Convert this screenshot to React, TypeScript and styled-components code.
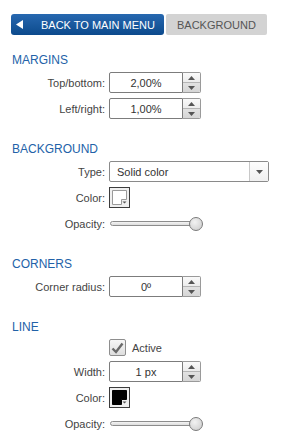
import React from "react";
import styled, { createGlobalStyle } from "styled-components";

const GlobalStyle = createGlobalStyle`
  html, body { margin: 0; padding: 0; background: #ffffff; }
  body { font-family: "Liberation Sans", Arial, sans-serif; color: #444; }
  * { box-sizing: border-box; }
`;

const Panel = styled.div`
  width: 281px;
  padding-top: 14px;
  padding-bottom: 12px;
`;

const Header = styled.div`
  display: flex;
  gap: 2px;
  padding-left: 11px;
  height: 21px;
`;

const BackButton = styled.button`
  all: unset;
  width: 153px;
  height: 21px;
  border-radius: 3px;
  background: linear-gradient(#2768b0, #0c4a8c);
  color: #fff;
  font-size: 11px;
  display: flex;
  align-items: center;
  padding-left: 5px;
  gap: 18px;
  box-sizing: border-box;
  font-family: "Liberation Sans", Arial, sans-serif;
`;

const Tab = styled.div`
  width: 101px;
  height: 21px;
  border-radius: 2px;
  background: #d3d3d3;
  color: #555;
  font-size: 11px;
  display: flex;
  align-items: center;
  padding-left: 11px;
`;

const Section = styled.section<{ $first?: boolean }>`
  margin-top: ${(p) => (p.$first ? 17 : 22)}px;
`;

const Title = styled.div`
  font-size: 12px;
  line-height: 16px;
  color: #2262a8;
  padding-left: 12px;
  margin-bottom: 4px;
`;

const Rows = styled.div`
  display: flex;
  flex-direction: column;
  gap: 5px;
`;

const Row = styled.div<{ $h?: number }>`
  display: grid;
  grid-template-columns: 105px auto;
  column-gap: 4px;
  align-items: center;
  height: ${(p) => p.$h ?? 21}px;
`;

const Label = styled.label`
  text-align: right;
  font-size: 11px;
  color: #444;
  white-space: nowrap;
`;

const NumberBox = styled.div`
  display: flex;
  width: 92px;
  height: 21px;
`;

const Field = styled.div`
  flex: 1;
  border: 1px solid #7c7c7c;
  border-radius: 2px 0 0 2px;
  background: #fff;
  font-size: 11px;
  color: #333;
  display: flex;
  align-items: center;
  justify-content: center;
`;

const Spinner = styled.div`
  width: 18px;
  display: flex;
  flex-direction: column;
  border: 1px solid #9a9a9a;
  border-left: none;
  border-radius: 0 2px 2px 0;
  overflow: hidden;
`;

const SpinHalf = styled.div<{ $down?: boolean }>`
  flex: 1;
  display: flex;
  align-items: center;
  justify-content: center;
  background: ${(p) => (p.$down ? "linear-gradient(#e2e2e2, #d6d6d6)" : "linear-gradient(#fafafa, #ececec)")};
  border-top: ${(p) => (p.$down ? "1px solid #b5b5b5" : "none")};
`;

const Select = styled.div`
  width: 160px;
  height: 21px;
  border: 1px solid #8a8a8a;
  border-radius: 2px;
  display: flex;
  background: #fff;
`;

const SelectText = styled.div`
  flex: 1;
  font-size: 11px;
  color: #333;
  padding-left: 7px;
  display: flex;
  align-items: center;
`;

const SelectArrow = styled.div`
  width: 19px;
  border-left: 1px solid #c8c8c8;
  display: flex;
  align-items: center;
  justify-content: center;
  background: linear-gradient(#fdfdfd, #f0f0f0);
`;

const Swatch = styled.div`
  width: 21px;
  height: 21px;
  display: flex;
`;

const Slider = styled.div`
  position: relative;
  width: 93px;
  height: 14px;
  display: flex;
  align-items: center;
`;

const Track = styled.div`
  width: 86px;
  height: 5px;
  margin-left: 1px;
  border: 1px solid #8c8c8c;
  border-radius: 3px;
  background: linear-gradient(#f4f4f4, #dcdcdc);
`;

const Thumb = styled.div`
  position: absolute;
  left: 80px;
  top: 0;
  width: 14px;
  height: 14px;
  border-radius: 50%;
  border: 1px solid #7a7a7a;
  background: radial-gradient(circle at 40% 35%, #f2f2f2, #c9c9c9);
`;

const CheckWrap = styled.div`
  display: flex;
  align-items: center;
  gap: 6px;
`;

const CheckBox = styled.div`
  width: 17px;
  height: 17px;
  border: 1px solid #8e8e8e;
  border-radius: 2px;
  background: linear-gradient(#f6f6f6, #dedede);
  display: flex;
  align-items: center;
  justify-content: center;
`;

const CheckText = styled.span`
  font-size: 11px;
  color: #444;
`;

const Up = () => (
  <svg width="7" height="4" viewBox="0 0 7 4">
    <path d="M0 4 L3.5 0 L7 4 Z" fill="#555" />
  </svg>
);
const Down = () => (
  <svg width="7" height="4" viewBox="0 0 7 4">
    <path d="M0 0 L3.5 4 L7 0 Z" fill="#555" />
  </svg>
);

const NumberInput = ({ value }: { value: string }) => (
  <NumberBox>
    <Field>{value}</Field>
    <Spinner>
      <SpinHalf><Up /></SpinHalf>
      <SpinHalf $down><Down /></SpinHalf>
    </Spinner>
  </NumberBox>
);

const ColorSwatch = ({ color }: { color: string }) => (
  <Swatch>
    <svg width="21" height="21" viewBox="0 0 21 21">
      <rect x="0.5" y="0.5" width="20" height="20" fill="#efefef" stroke="#3c3c3c" />
      <path
        d="M3.5 3.5 H17.5 V12.5 H12.5 V17.5 H3.5 Z"
        fill={color}
        stroke={color === "#000000" ? "#000" : "#9a9a9a"}
      />
      <path d="M13.5 14.5 H17.5 L15.5 16.5 Z" fill="#555" />
    </svg>
  </Swatch>
);

const OpacitySlider = () => (
  <Slider>
    <Track />
    <Thumb />
  </Slider>
);

export default function App() {
  return (
    <>
      <GlobalStyle />
      <Panel>
        <Header>
          <BackButton>
            <svg width="7" height="9" viewBox="0 0 7 9">
              <path d="M7 0 L0 4.5 L7 9 Z" fill="#fff" />
            </svg>
            <span>BACK TO MAIN MENU</span>
          </BackButton>
          <Tab>BACKGROUND</Tab>
        </Header>

        <Section $first>
          <Title>MARGINS</Title>
          <Rows>
            <Row>
              <Label>Top/bottom:</Label>
              <NumberInput value="2,00%" />
            </Row>
            <Row>
              <Label>Left/right:</Label>
              <NumberInput value="1,00%" />
            </Row>
          </Rows>
        </Section>

        <Section>
          <Title>BACKGROUND</Title>
          <Rows>
            <Row>
              <Label>Type:</Label>
              <Select>
                <SelectText>Solid color</SelectText>
                <SelectArrow><Down /></SelectArrow>
              </Select>
            </Row>
            <Row>
              <Label>Color:</Label>
              <ColorSwatch color="#ffffff" />
            </Row>
            <Row>
              <Label>Opacity:</Label>
              <OpacitySlider />
            </Row>
          </Rows>
        </Section>

        <Section>
          <Title>CORNERS</Title>
          <Rows>
            <Row>
              <Label>Corner radius:</Label>
              <NumberInput value="0º" />
            </Row>
          </Rows>
        </Section>

        <Section>
          <Title>LINE</Title>
          <Rows>
            <Row $h={17}>
              <span />
              <CheckWrap>
                <CheckBox>
                  <svg width="13" height="12" viewBox="0 0 13 12">
                    <path d="M1.5 6.5 L5 10 L11.5 1.5" fill="none" stroke="#6a6a6a" strokeWidth="2.4" />
                  </svg>
                </CheckBox>
                <CheckText>Active</CheckText>
              </CheckWrap>
            </Row>
            <Row>
              <Label>Width:</Label>
              <NumberInput value="1 px" />
            </Row>
            <Row>
              <Label>Color:</Label>
              <ColorSwatch color="#000000" />
            </Row>
            <Row>
              <Label>Opacity:</Label>
              <OpacitySlider />
            </Row>
          </Rows>
        </Section>
      </Panel>
    </>
  );
}
